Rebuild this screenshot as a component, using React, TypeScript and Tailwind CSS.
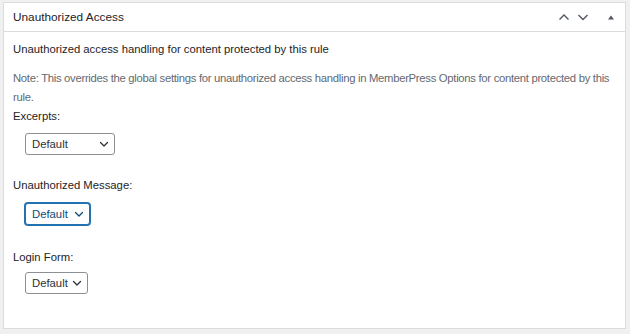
import React from 'react';

const Chevron: React.FC<{ className?: string }> = ({ className }) => (
  <svg viewBox="0 0 10 10" className={className} fill="none" stroke="currentColor" strokeWidth={1.3} strokeLinecap="round" strokeLinejoin="round">
    <path d="M1.5 3.5L5 7l3.5-3.5" />
  </svg>
);

const SelectBox: React.FC<{ width: string; focused?: boolean }> = ({ width, focused }) => (
  <div
    className={`flex items-center justify-between h-[22px] pl-[6px] pr-[5px] rounded-[3px] bg-white text-[11.3px] ${width} ${
      focused
        ? 'border border-[#2271b1] shadow-[0_0_0_1px_#2271b1] text-[#0a4b78]'
        : 'border border-[#8c8f94] text-[#2c3338]'
    }`}
  >
    <span>Default</span>
    <Chevron className="w-[10px] h-[10px]" />
  </div>
);

export default function App() {
  return (
    <div className="w-[630px] h-[334px] bg-[#f0f0f1] pt-[2px] pl-[3px] font-['Liberation_Sans',Arial,sans-serif] text-[#1d2327]">
      <div className="w-[623px] h-[327px] bg-white border border-[#dcdcde]">
        <div className="flex items-center justify-between h-[29px] border-b border-[#dcdcde] pl-[9px] pr-[8px]">
          <h2 className="text-[11.8px] pt-[1px]">Unauthorized Access</h2>
          <div className="flex items-center gap-[7px] text-[#50575e]">
            <svg viewBox="0 0 12 12" className="w-[12px] h-[12px]" fill="none" stroke="currentColor" strokeWidth={1.4}>
              <path d="M1.5 8.5L6 4l4.5 4.5" />
            </svg>
            <svg viewBox="0 0 12 12" className="w-[12px] h-[12px]" fill="none" stroke="currentColor" strokeWidth={1.4}>
              <path d="M1.5 4L6 8.5 10.5 4" />
            </svg>
            <svg viewBox="0 0 12 12" className="w-[12px] h-[12px] ml-[9px]" fill="currentColor">
              <path d="M3 8.5l3-4 3 4z" />
            </svg>
          </div>
        </div>
        <div className="px-[9px] pt-[8px] text-[11.3px]">
          <p className="leading-[18px]">Unauthorized access handling for content protected by this rule</p>
          <p className="mt-[11px] text-[#646970] leading-[19px] tracking-[-0.3px]">
            Note: This overrides the global settings for unauthorized access handling in MemberPress Options for content protected by this rule.
          </p>
          <div className="leading-[18px]">Excerpts:</div>
          <div className="mt-[8px] ml-[12px]">
            <SelectBox width="w-[90px]" />
          </div>
          <div className="mt-[21px] leading-[18px]">Unauthorized Message:</div>
          <div className="mt-[9px] ml-[12px]">
            <SelectBox width="w-[65px]" focused />
          </div>
          <div className="mt-[23px] leading-[18px]">Login Form:</div>
          <div className="mt-[6px] ml-[12px]">
            <SelectBox width="w-[63px]" />
          </div>
        </div>
      </div>
    </div>
  );
}
